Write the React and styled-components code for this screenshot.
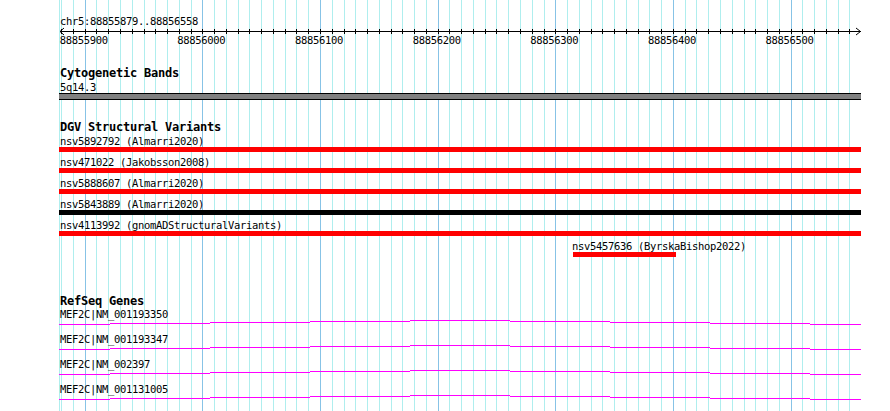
import React from "react";
import styled, { createGlobalStyle } from "styled-components";

const VIEW_START = 88855879;
const VIEW_END = 88856558;
const ORIGIN = 60.5;
const SCALE = 800 / 680;
const TRACK_LEFT = 59;
const TRACK_WIDTH = 802;

const bpToX = (bp) => ORIGIN + (bp - VIEW_START) * SCALE;

const gridStops = [];
for (let bp = 88855880; bp <= 88856550; bp += 10) gridStops.push(bp);
const rulerLabels = [88855900, 88856000, 88856100, 88856200, 88856300, 88856400, 88856500];

const variants = [
  { id: "nsv5892792", study: "Almarri2020", color: "#ff0000" },
  { id: "nsv471022", study: "Jakobsson2008", color: "#ff0000" },
  { id: "nsv5888607", study: "Almarri2020", color: "#ff0000" },
  { id: "nsv5843889", study: "Almarri2020", color: "#000000" },
  { id: "nsv4113992", study: "gnomADStructuralVariants", color: "#ff0000" },
  { id: "nsv5457636", study: "ByrskaBishop2022", color: "#ff0000", start: 88856315, end: 88856403 },
];

const genes = ["MEF2C|NM_001193350", "MEF2C|NM_001193347", "MEF2C|NM_002397", "MEF2C|NM_001131005"];

// arch shaped gene model: 100px steps, one pixel up then down
const geneSteps = [0, 51, 151, 251, 351, 451, 551, 651, 751, 802];
const geneLevels = [4, 3, 2, 1, 0, 1, 2, 3, 4];

const GlobalStyle = createGlobalStyle`
  html, body {
    margin: 0;
    padding: 0;
    background: #ffffff;
  }
  body {
    font-family: "DejaVu Sans Mono", "Liberation Mono", monospace;
    color: #000000;
  }
`;

const Browser = styled.div`
  position: relative;
  width: 890px;
  height: 411px;
  overflow: hidden;
  background: #ffffff;
`;

const Grid = styled.svg`
  position: absolute;
  left: 0;
  top: 0;
  display: block;
`;

const Tracks = styled.div`
  position: relative;
  display: flex;
  flex-direction: column;
  align-items: flex-start;
  padding: 15px 0 0 ${TRACK_LEFT}px;
`;

const SmallText = styled.div`
  font-family: "DejaVu Sans Mono", "Liberation Mono", monospace;
  font-size: 10.5px;
  letter-spacing: -0.32px;
  line-height: ${(p) => p.$lh || 12}px;
  height: ${(p) => p.$lh || 12}px;
  padding-left: 1px;
  margin-left: ${(p) => p.$shift || 0}px;
  white-space: nowrap;
`;

const Ruler = styled.svg`
  display: block;
  overflow: visible;
`;

const RulerScale = styled.div`
  position: relative;
  width: ${TRACK_WIDTH}px;
  height: 12px;
`;

const RulerLabel = styled.span`
  position: absolute;
  top: 0;
  font-size: 10.5px;
  letter-spacing: -0.32px;
  line-height: 12px;
  white-space: nowrap;
`;

const Track = styled.section`
  display: flex;
  flex-direction: column;
  align-items: flex-start;
  margin-top: ${(p) => p.$gap}px;
`;

const TrackTitle = styled.h2`
  margin: 0 0 1px 0;
  padding-left: 1px;
  font-family: "DejaVu Sans Mono", monospace;
  font-weight: bold;
  font-size: 12px;
  letter-spacing: -0.22px;
  line-height: 13px;
  height: 13px;
  white-space: nowrap;
`;

const BandBar = styled.div`
  box-sizing: border-box;
  width: ${TRACK_WIDTH}px;
  height: 7px;
  background: #808080;
  border-top: 1px solid #000000;
  border-bottom: 1px solid #000000;
`;

const VariantRow = styled.div`
  display: flex;
  flex-direction: column;
  align-items: flex-start;
  height: 21px;
`;

const VariantBar = styled.div`
  height: 5px;
  width: ${(p) => p.$width}px;
  margin-left: ${(p) => p.$offset || 0}px;
  background: ${(p) => p.$color};
`;

const GeneRow = styled.div`
  display: flex;
  flex-direction: column;
  align-items: flex-start;
  height: 25px;
`;

const GeneModel = styled.svg`
  display: block;
`;

function GridLines() {
  return (
    <Grid width="890" height="411">
      <line x1="59.5" y1="0" x2="59.5" y2="411" stroke="#afeeee" strokeWidth="1" />
      {gridStops.map((bp) => {
        const x = Math.floor(bpToX(bp)) + 0.5;
        const major = bp % 100 === 0;
        return (
          <line
            key={bp}
            x1={x}
            y1="0"
            x2={x}
            y2="411"
            stroke={major ? "#87c3e6" : "#afeeee"}
            strokeWidth="1"
          />
        );
      })}
    </Grid>
  );
}

function RulerAxis() {
  return (
    <Ruler width={TRACK_WIDTH} height="7" shapeRendering="crispEdges">
      <line x1="1" y1="4.5" x2="801.5" y2="4.5" stroke="#000" strokeWidth="1" />
      {gridStops.map((bp) => {
        const x = Math.floor(bpToX(bp)) - TRACK_LEFT + 0.5;
        return <line key={bp} x1={x} y1="2" x2={x} y2="7" stroke="#000" strokeWidth="1" />;
      })}
      <polyline points="5,1 1,4.5 5,8" fill="none" stroke="#000" strokeWidth="1" shapeRendering="auto" />
      <polyline points="797,1 801.5,4.5 797,8" fill="none" stroke="#000" strokeWidth="1" shapeRendering="auto" />
    </Ruler>
  );
}

function Variant({ v }) {
  if (v.start) {
    const left = Math.floor(bpToX(v.start));
    const right = Math.floor(bpToX(v.end));
    return (
      <VariantRow style={{ paddingLeft: left - TRACK_LEFT - 2 }}>
        <SmallText>{`${v.id} (${v.study})`}</SmallText>
        <VariantBar $color={v.color} $width={right - left} $offset={2} />
      </VariantRow>
    );
  }
  return (
    <VariantRow>
      <SmallText>{`${v.id} (${v.study})`}</SmallText>
      <VariantBar $color={v.color} $width={TRACK_WIDTH} />
    </VariantRow>
  );
}

function Gene({ name }) {
  const d = geneLevels
    .map((lvl, i) => `M${geneSteps[i]} ${lvl + 0.5}H${geneSteps[i + 1]}`)
    .join(" ");
  return (
    <GeneRow>
      <SmallText $lh={11}>{name}</SmallText>
      <GeneModel width={TRACK_WIDTH} height="5" shapeRendering="crispEdges">
        <path d={d} stroke="#ff00ff" strokeWidth="1" fill="none" />
      </GeneModel>
    </GeneRow>
  );
}

export default function App() {
  return (
    <>
      <GlobalStyle />
      <Browser>
        <GridLines />
        <Tracks>
          <SmallText>{`chr5:${VIEW_START}..${VIEW_END}`}</SmallText>
          <RulerAxis />
          <RulerScale>
            {rulerLabels.map((bp) => (
              <RulerLabel key={bp} style={{ left: bpToX(bp) - 25.5 - TRACK_LEFT }}>
                {bp}
              </RulerLabel>
            ))}
          </RulerScale>

          <Track $gap={21}>
            <TrackTitle>Cytogenetic Bands</TrackTitle>
            <SmallText>5q14.3</SmallText>
            <BandBar />
          </Track>

          <Track $gap={21}>
            <TrackTitle>DGV Structural Variants</TrackTitle>
            {variants.map((v) => (
              <Variant key={v.id} v={v} />
            ))}
          </Track>

          <Track $gap={34}>
            <TrackTitle>RefSeq Genes</TrackTitle>
            {genes.map((g) => (
              <Gene key={g} name={g} />
            ))}
          </Track>
        </Tracks>
      </Browser>
    </>
  );
}
